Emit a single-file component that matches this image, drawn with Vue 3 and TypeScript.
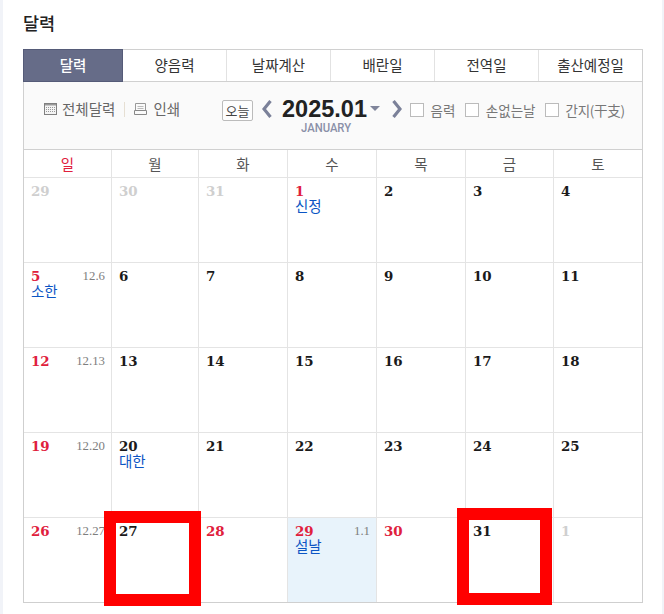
<script setup lang="ts">
interface Day { n: number; kind: 'off' | 'sun' | 'norm'; lunar?: string; note?: string; holiday?: boolean }
const tabs = ['달력', '양음력', '날짜계산', '배란일', '전역일', '출산예정일']
const heads = ['일', '월', '화', '수', '목', '금', '토']
const notes: Record<number, { lunar?: string; note?: string }> = {
  1: { note: '신정' },
  5: { lunar: '12.6', note: '소한' },
  12: { lunar: '12.13' },
  19: { lunar: '12.20' },
  20: { note: '대한' },
  26: { lunar: '12.27' },
  29: { lunar: '1.1', note: '설날' }
}
const days: Day[] = [
  { n: 29, kind: 'off' }, { n: 30, kind: 'off' }, { n: 31, kind: 'off' }
]
const redDays = [1, 5, 12, 19, 26, 28, 29, 30]
for (let n = 1; n <= 31; n++) {
  days.push({ n, kind: redDays.includes(n) ? 'sun' : 'norm', ...notes[n], holiday: n === 29 })
}
days.push({ n: 1, kind: 'off' })
</script>

<template>
  <div class="page">
    <h1 class="title">달력</h1>
    <div class="cal">
      <nav class="tabs">
        <a v-for="(t, i) in tabs" :key="t" class="tab" :class="{ on: i === 0 }">{{ t }}</a>
      </nav>
      <div class="bar">
        <div class="left">
          <svg class="ic" width="13" height="12" viewBox="0 0 13 12">
            <rect x="0.5" y="0.5" width="12" height="11" fill="#f4f4f4" stroke="#808080" />
            <rect x="1" y="1" width="11" height="1.500" fill="#999" />
            <path d="M2 4.500h9M2 6.500h9M2 8.500h9" stroke="#999" stroke-width="1" stroke-dasharray="1 1" />
          </svg>
          <span class="lnk">전체달력</span>
          <i class="sep"></i>
          <svg class="ic" width="13" height="12" viewBox="0 0 13 12">
            <path d="M1.500 7.500V.5h10v7" fill="none" stroke="#999" />
            <path d="M.5 7.500h12v4H.5z" fill="none" stroke="#888" />
            <path d="M3.500 3.500h6M3.500 5.500h6" stroke="#bbb" />
          </svg>
          <span class="lnk second">인쇄</span>
        </div>
        <button class="today">오늘</button>
        <svg class="arrow prev" width="10" height="18" viewBox="0 0 10 18"><path d="M8.500 1 2 9l6.500 8" fill="none" stroke="#7b8199" stroke-width="3.200" /></svg>
        <div class="ym">
          <div class="num">2025.01<span class="caret"></span></div>
          <div class="en">JANUARY</div>
        </div>
        <svg class="arrow next" width="10" height="18" viewBox="0 0 10 18"><path d="M1.500 1 8 9l-6.500 8" fill="none" stroke="#7b8199" stroke-width="3.200" /></svg>
        <label class="chk c1"><i></i>음력</label>
        <label class="chk c2"><i></i>손없는날</label>
        <label class="chk c3"><i></i>간지(干支)</label>
      </div>
      <div class="grid">
        <div v-for="(h, i) in heads" :key="h" class="head" :class="{ red: i === 0 }">{{ h }}</div>
        <div v-for="(d, i) in days" :key="i" class="cell" :class="{ holiday: d.holiday }">
          <div class="top">
            <b class="n" :class="d.kind">{{ d.n }}</b>
            <span v-if="d.lunar" class="lunar">{{ d.lunar }}</span>
          </div>
          <div v-if="d.note" class="note">{{ d.note }}</div>
        </div>
      </div>
    </div>
    <div class="mark m1"></div>
    <div class="mark m2"></div>
  </div>
</template>

<style scoped>
.page {
  position: relative;
  width: 664px;
  height: 614px;
  box-sizing: border-box;
  padding: 0 21px 0 23px;
  background: #fff;
  font-family: "Noto Sans CJK KR", "Noto Sans", sans-serif;
  color: #222;
  overflow: hidden;
}
.page::before,
.page::after {
  content: "";
  position: absolute;
  top: 0;
  bottom: 0;
  background: #f1f3f8;
}
.page::before { left: 0; width: 3px; }
.page::after { right: 0; width: 2px; }
.title {
  margin: 0;
  height: 49px;
  box-sizing: border-box;
  padding-top: 11px;
  font-size: 17.500px;
  line-height: 24px;
  font-weight: 500;
  color: #222;
}
.cal { width: 620px; }
.tabs {
  display: grid;
  grid-template-columns: 100px 103px repeat(4, 104px);
  height: 33px;
  box-sizing: border-box;
  border: 1px solid #d0d0d0;
  border-left: 0;
}
.tab {
  display: flex;
  align-items: center;
  justify-content: center;
  padding-bottom: 3px;
  font-size: 14.500px;
  color: #333;
  border-left: 1px solid #e2e2e2;
}
.tab.on {
  margin: -1px 0;
  background: #666c88;
  border: 1px solid #555b78;
  color: #fff;
  font-weight: 500;
}
.tab.on + .tab { border-left: 0; }
.bar {
  display: flex;
  align-items: flex-start;
  height: 68px;
  box-sizing: border-box;
  background: #fafafa;
  border: 1px solid #d0d0d0;
  border-top: 0;
  padding-left: 20px;
}
.left {
  display: flex;
  align-items: center;
  width: 178px;
  height: 20px;
  margin-top: 17px;
  flex: none;
}
.ic { flex: none; }
.lnk {
  margin-left: 5px;
  font-size: 14.500px;
  line-height: 20px;
  color: #666;
}
.lnk.second { margin-left: 6px; }
.sep {
  width: 1px;
  height: 15px;
  background: #e6dfd3;
  margin: 0 9px 0 9px;
}
.today {
  flex: none;
  width: 31px;
  height: 21px;
  margin-top: 18px;
  padding: 0;
  border: 1px solid #bbb;
  border-radius: 2px;
  background: #fdfdfd;
  font: 13px/18px "Noto Sans CJK KR", sans-serif;
  color: #444;
}
.arrow { flex: none; margin-top: 18px; }
.prev { margin-left: 9px; }
.ym {
  flex: none;
  width: 110px;
  margin-left: 10px;
  height: 40px;
}
.num {
  margin-top: 13px;
  font: 700 23.500px/28px "Liberation Sans", sans-serif;
  color: #222;
  display: flex;
  align-items: center;
  white-space: nowrap;
}
.caret {
  width: 0;
  height: 0;
  margin-left: 3px;
  margin-top: -2px;
  border: 5px solid transparent;
  border-top: 5px solid #80859b;
  border-bottom: 0;
}
.en {
  padding-left: 19px;
  font: 500 12px/11px "Roboto", "Liberation Sans", sans-serif;
  color: #8a90a8;
  transform: scaleX(.94);
  transform-origin: 19px 0;
}
.chk {
  display: flex;
  align-items: center;
  flex: none;
  margin-top: 18px;
  height: 20px;
  font-size: 13.500px;
  color: #777;
  white-space: nowrap;
}
.c1 { margin-left: 8px; }
.c2 { margin-left: 10px; }
.c3 { margin-left: 9.500px; letter-spacing: -0.3px; }
.chk i {
  width: 12px;
  height: 12px;
  border: 1px solid #bbb;
  background: #fff;
  margin-right: 6.500px;
}
.grid {
  display: grid;
  grid-template-columns: 87px 87px 89px 89px 89px 88px 89px;
  grid-template-rows: 28px 84px repeat(4, 85px);
  border-left: 1px solid #cfcfcf;
  border-right: 1px solid #cfcfcf;
  border-bottom: 1px solid #cfcfcf;
  box-sizing: border-box;
  width: 620px;
  height: 453px;
}
.head {
  display: flex;
  align-items: center;
  justify-content: center;
  padding-bottom: 1px;
  font-size: 14.500px;
  color: #555;
  border-left: 1px solid #e4e4e4;
  border-bottom: 1px solid #e4e4e4;
}
.head:first-child { border-left: 0; }
.head.red { color: #e0203c; }
.cell {
  box-sizing: border-box;
  padding: 6px 6px 0 7px;
  border-left: 1px solid #e4e4e4;
  border-top: 1px solid #e4e4e4;
  min-width: 0;
}
.cell:nth-child(7n + 1) { border-left: 0; }
.cell:nth-child(-n + 14) { border-top: 0; }
.cell.holiday { background: #e8f3fb; }
.top {
  display: flex;
  justify-content: space-between;
  align-items: center;
  height: 14px;
}
.n { font: 700 13.400px/14px "DejaVu Serif", serif; }
.n.norm { color: #1a1a1a; }
.n.sun { color: #e0203c; }
.n.off { color: #cfcfcf; }
.lunar {
  font: 12.800px/14px "Liberation Serif", serif;
  color: #7e7e7e;
}
.note {
  font-size: 14.500px;
  line-height: 16px;
  color: #0b55c4;
}
.mark {
  position: absolute;
  box-sizing: border-box;
  border: 12px solid #f00;
}
.m1 { left: 104px; top: 511px; width: 97px; height: 95px; }
.m2 { left: 457px; top: 508px; width: 95px; height: 97px; }
</style>
